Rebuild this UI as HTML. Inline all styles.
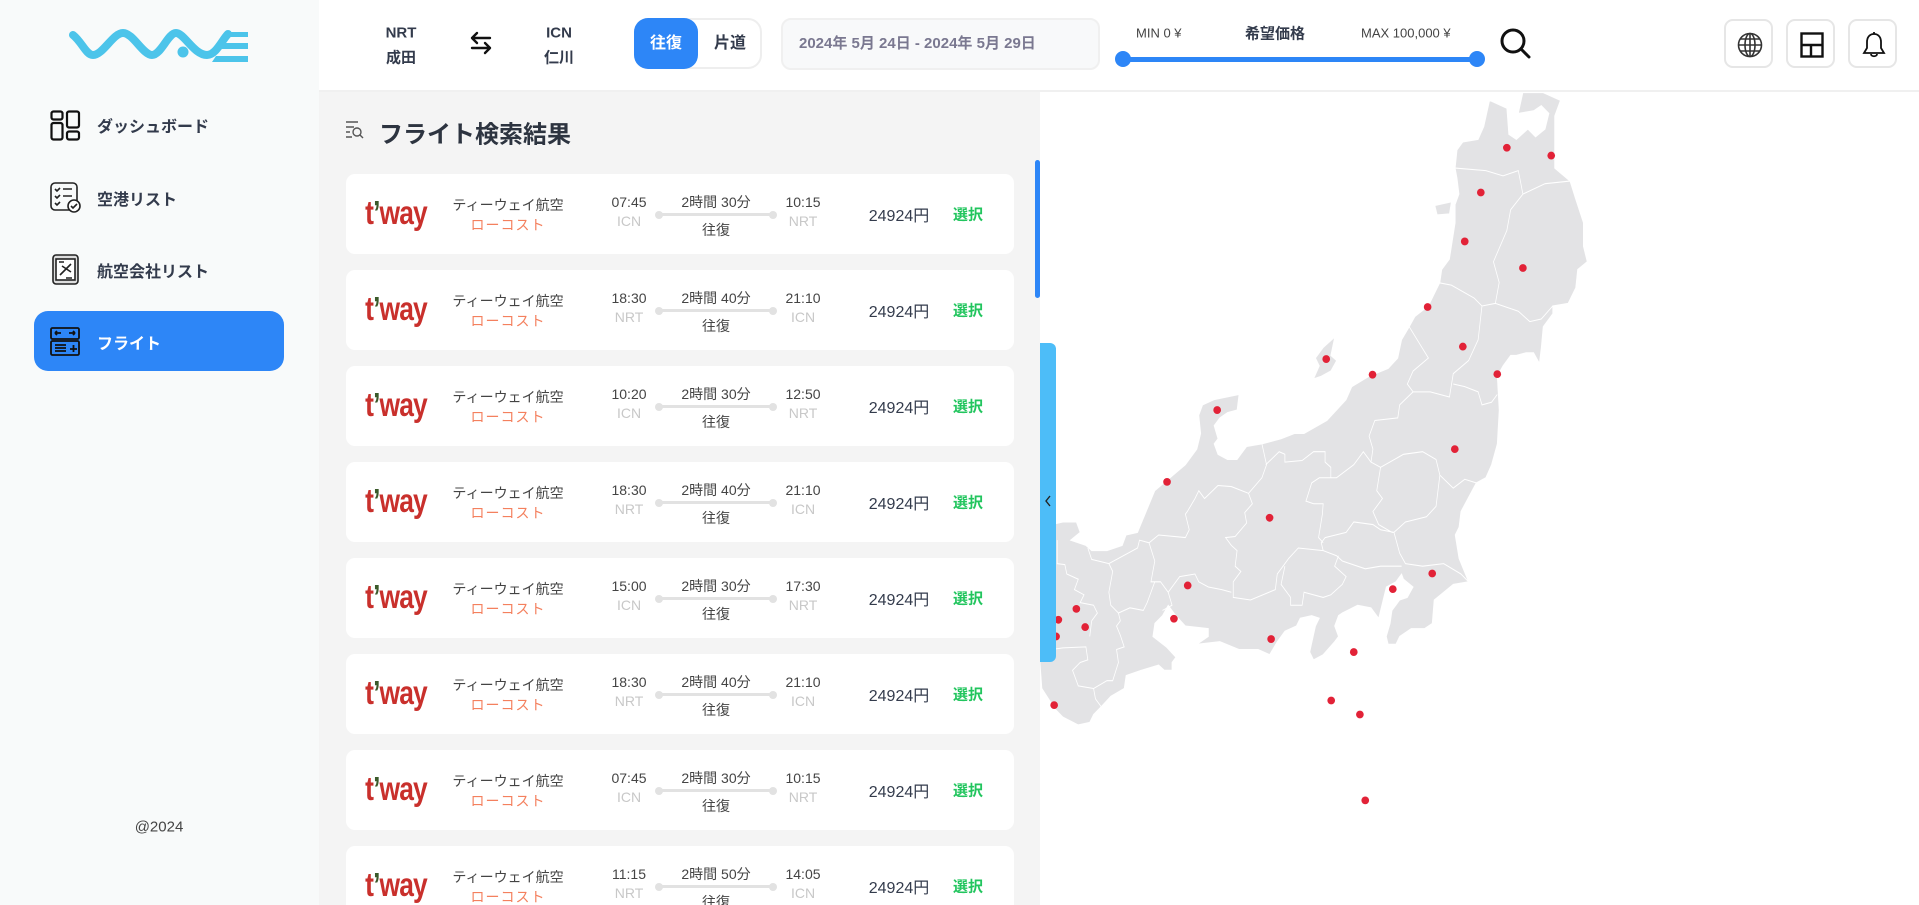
<!DOCTYPE html>
<html><head><meta charset="utf-8"><style>
*{margin:0;padding:0;box-sizing:border-box}
body{width:1919px;height:905px;overflow:hidden;position:relative;background:#fff;font-family:"Liberation Sans","Noto Sans CJK JP",sans-serif;color:#333b4c}
.abs{position:absolute}
#side{left:0;top:0;width:319px;height:905px;background:#f8fafa}
#head{left:319px;top:0;width:1600px;height:92px;background:#fff;border-bottom:2px solid #f0f0f0}
#list{left:319px;top:92px;width:721px;height:813px;background:#f4f4f4;overflow:hidden}
.nav{position:absolute;left:97px;font-size:16px;font-weight:bold;color:#333b4c;transform:translateY(-50%)}
.card{position:absolute;left:27px;width:668px;height:80px;background:#fff;border-radius:9px}
.card div{position:absolute;transform:translate(-50%,-50%);white-space:nowrap}
.card div.tw{font-family:"Liberation Sans",sans-serif;font-weight:bold;font-size:30px;color:#c9302c;letter-spacing:-1px;left:50px;top:40px;transform:translate(-50%,-50%) scale(0.88,1.12)}
.tw span{color:#3a5a2a}
.nm{font-size:14px;color:#444}
.lc{font-size:14px;color:#f4805e;letter-spacing:1px}
.tm{font-size:14px;color:#444}
.cd{font-size:14px;color:#c8c8c8}
.ln{position:absolute;left:312px;top:39px;width:116px;height:3px;background:#e2e2e2}
.ln:before,.ln:after{content:"";position:absolute;top:-2.5px;width:8px;height:8px;border-radius:50%;background:#e2e2e2}
.ln:before{left:-3px}.ln:after{right:-3px}
.pr{font-size:16px;color:#333b4c}
.sl{font-size:15px;font-weight:bold;color:#22c55e}
.ib{position:absolute;top:19px;width:49px;height:49px;border:2px solid #e6e6e6;border-radius:9px;background:#fff}
</style></head><body>
<div id="side" class="abs">
<svg class="abs" style="left:60px;top:20px" width="200" height="50" viewBox="0 0 200 50">
<path d="M13 15 C22 22 26 35 33 35 C43 35 53 13 63 13 C73 13 83 35 92 35 C101 35 108 13 116 13 C124 13 134 35 147 35 C156 35 162 20 168 14" fill="none" stroke="#4cc4ea" stroke-width="8" stroke-linecap="round"/>
<circle cx="123" cy="32" r="5.5" fill="#4cc4ea"/>
<path d="M167 12h21v5h-24z M162 23h26v6h-30z M156 36h32v6h-36z" fill="#4cc4ea"/>
</svg>
<svg class="abs" style="left:50px;top:110px" width="31" height="31" viewBox="0 0 31 31" fill="none" stroke="#111" stroke-width="2.2"><rect x="1.5" y="1.5" width="11" height="8" rx="2"/><rect x="1.5" y="13" width="11" height="16.5" rx="2"/><rect x="17" y="1.5" width="12" height="16" rx="2"/><rect x="17" y="21.5" width="12" height="8" rx="2"/></svg>
<div class="nav" style="top:125px">ダッシュボード</div>
<svg class="abs" style="left:50px;top:182px" width="31" height="31" viewBox="0 0 31 31" fill="none" stroke="#222" stroke-width="1.6"><rect x="1" y="1" width="26" height="27" rx="4"/><path d="M5 7l2 2 3-3M13 7h9M5 14l2 2 3-3M13 14h9M5 21l2 2 3-3"/><circle cx="24" cy="24" r="6" fill="#fff"/><path d="M21 24l2 2 4-4"/></svg>
<div class="nav" style="top:198px">空港リスト</div>
<svg class="abs" style="left:52px;top:254px" width="27" height="31" viewBox="0 0 27 31" fill="none" stroke="#222" stroke-width="1.6"><rect x="1" y="1" width="25" height="29" rx="3" fill="#ddd"/><rect x="4" y="5" width="19" height="21" fill="#fff"/><path d="M8 21l11-11M10 12l9 6M7 8h5M14 24h6"/></svg>
<div class="nav" style="top:270px">航空会社リスト</div>
<div class="abs" style="left:34px;top:311px;width:250px;height:60px;background:#2d86f7;border-radius:14px"></div>
<svg class="abs" style="left:50px;top:326px" width="30" height="30" viewBox="0 0 30 30" fill="none" stroke="#111" stroke-width="1.8"><rect x="1" y="2" width="28" height="11" rx="1.5" fill="#2d86f7"/><rect x="1" y="15" width="28" height="14" rx="1.5" fill="#2d86f7"/><path d="M5 7h6M5 7l2-2M5 7l2 2M19 7h6M25 7l-2-2M25 7l-2 2M5 19h11M5 22h11M5 25h11M20 23h7M23.5 19v7"/></svg>
<div class="nav" style="top:342px;color:#fff">フライト</div>
<div class="abs" style="left:159px;top:827px;transform:translate(-50%,-50%);font-size:15px;color:#444">@2024</div>
</div>

<div id="head" class="abs">
<div class="abs" style="left:82px;top:33px;transform:translate(-50%,-50%);font-size:15px;font-weight:bold">NRT</div>
<div class="abs" style="left:82px;top:57px;transform:translate(-50%,-50%);font-size:15px;font-weight:bold">成田</div>
<svg class="abs" style="left:149px;top:30px" width="26" height="26" viewBox="0 0 26 26" fill="none" stroke="#111" stroke-width="2.4" stroke-linecap="round"><path d="M22 8H4M4 8l5-5M4 8l5 5M4 18h18M22 18l-5-5M22 18l-5 5"/></svg>
<div class="abs" style="left:240px;top:33px;transform:translate(-50%,-50%);font-size:15px;font-weight:bold">ICN</div>
<div class="abs" style="left:240px;top:57px;transform:translate(-50%,-50%);font-size:15px;font-weight:bold">仁川</div>
<div class="abs" style="left:315px;top:18px;width:128px;height:51px;border:2px solid #eee;border-radius:14px;background:#fff"></div>
<div class="abs" style="left:315px;top:18px;width:64px;height:51px;border-radius:14px;background:#2d86f7;color:#fff;font-size:16px;font-weight:bold;text-align:center;line-height:51px">往復</div>
<div class="abs" style="left:379px;top:18px;width:64px;height:51px;font-size:16px;font-weight:bold;text-align:center;line-height:51px">片道</div>
<div class="abs" style="left:462px;top:18px;width:319px;height:52px;border:2px solid #f0f0f0;border-radius:10px;background:#f8f9fa;color:#7a7890;font-size:15px;font-weight:bold;line-height:48px;padding-left:16px">2024年 5月 24日 - 2024年 5月 29日</div>
<div class="abs" style="left:817px;top:33px;transform:translateY(-50%);font-size:13px;color:#444">MIN 0 ¥</div>
<div class="abs" style="left:956px;top:33px;transform:translate(-50%,-50%);font-size:15px;font-weight:bold">希望価格</div>
<div class="abs" style="left:1042px;top:33px;transform:translateY(-50%);font-size:13px;color:#444">MAX 100,000 ¥</div>
<div class="abs" style="left:804px;top:57px;width:354px;height:5px;background:#2d86f7"></div>
<div class="abs" style="left:796px;top:51px;width:16px;height:16px;border-radius:50%;background:#2d86f7"></div>
<div class="abs" style="left:1150px;top:51px;width:16px;height:16px;border-radius:50%;background:#2d86f7"></div>
<svg class="abs" style="left:1180px;top:27px" width="34" height="34" viewBox="0 0 34 34" fill="none" stroke="#111" stroke-width="3"><circle cx="14" cy="14" r="11"/><path d="M22 22l8 8" stroke-linecap="round"/></svg>
<div class="ib" style="left:1405px"><svg style="position:absolute;left:11px;top:11px" width="26" height="26" viewBox="0 0 26 26" fill="none" stroke="#333" stroke-width="1.6"><circle cx="13" cy="13" r="11.5"/><ellipse cx="13" cy="13" rx="5" ry="11.5"/><path d="M1.5 13h23M3.5 7h19M3.5 19h19M13 1.5v23"/></svg></div>
<div class="ib" style="left:1467px"><svg style="position:absolute;left:12px;top:11px" width="24" height="26" viewBox="0 0 24 26" fill="none" stroke="#111" stroke-width="2.4"><rect x="1.5" y="1.5" width="21" height="23"/><path d="M1.5 13h21M11 13v11.5"/></svg></div>
<div class="ib" style="left:1529px"><svg style="position:absolute;left:11px;top:9px" width="26" height="30" viewBox="0 0 26 30" fill="none" stroke="#111" stroke-width="1.8"><path d="M13 2v2M13 4c-5 0-7 4-7 8v6l-3 5h20l-3-5v-6c0-4-2-8-7-8zM10 24c0 3 6 3 6 0"/></svg></div>
</div>

<div id="list" class="abs">
<svg class="abs" style="left:26px;top:28px" width="20" height="20" viewBox="0 0 20 20" fill="none" stroke="#555" stroke-width="1.4"><path d="M1 2h12M1 7h8M1 12h4M1 17h6"/><circle cx="12" cy="12" r="4"/><path d="M15 15l3 3"/></svg>
<div class="abs" style="left:60px;top:40px;transform:translateY(-50%);font-size:24px;font-weight:bold;color:#2d3440">フライト検索結果</div>
<div class="abs" style="left:716px;top:68px;width:5px;height:138px;border-radius:3px;background:#2d86f7"></div>
<div id="cards"></div>
</div>

<svg class="abs" style="left:1040px;top:90px" width="600" height="815" viewBox="0 0 1568 1566" preserveAspectRatio="none">
<g fill="#e3e3e5" stroke="#fff" stroke-width="2">
<path d="M1175 20L1220 35L1225 85L1245 95L1275 75L1295 90L1320 75L1330 45L1310 30L1290 40L1250 45L1262 5L1315 5L1360 20L1345 50L1345 150L1385 175L1400 210L1420 255L1420 300L1430 330L1405 345L1400 380L1380 410L1340 415L1340 430L1315 455L1310 495L1305 525L1290 505L1270 505L1245 510L1230 510L1210 530L1195 550L1200 615L1195 680L1180 720L1165 745L1140 755L1100 810L1095 840L1085 855L1095 900L1120 945L1080 950L1030 980L1025 1025L1005 1035L970 1035L940 1050L930 1065L910 1065L905 1050L915 1025L920 1000L940 980L960 975L975 955L950 940L945 930L930 945L905 955L890 1000L885 1015L865 995L830 990L790 1005L780 1010L770 1030L780 1050L770 1060L740 1085L715 1095L705 1080L720 1030L730 1015L710 1010L680 1015L670 1030L640 1040L620 1060L600 1085L570 1075L520 1075L470 1060L410 1065L440 1050L440 1035L380 1030L355 1010L335 990L320 1010L300 1025L295 1050L330 1070L355 1090L345 1100L345 1115L325 1115L310 1105L265 1115L225 1125L220 1150L185 1165L160 1185L140 1200L130 1215L100 1220L60 1205L40 1190L5 1150L0 1100L0 840L60 830L95 830L105 850L80 865L120 875L135 885L175 885L215 875L225 855L255 850L300 770L340 745L380 720L410 690L420 660L415 625L425 605L455 595L520 585L515 615L490 620L470 630L455 645L465 670L455 680L465 700L490 710L515 710L525 700L540 685L580 680L630 670L665 660L690 660L750 635L800 595L815 570L860 550L910 535L935 515L945 480L965 455L980 435L1015 415L1045 370L1050 345L1070 325L1085 255L1085 220L1095 200L1090 170L1085 150L1090 115L1105 100L1145 95L1160 70Z"/>
<path d="M715 555L735 550L760 540L775 520L760 510L770 475L740 495L720 515L730 530Z"/>
<path d="M1032 222L1075 215L1070 238L1038 240Z"/>
</g>
<g fill="none" stroke="#fff" stroke-width="2">
<path d="M1085 150L1165 155L1210 165L1250 155L1262 200L1320 180L1385 175"/>
<path d="M1262 200L1230 230L1220 270L1185 330L1200 370L1190 410L1155 415L1135 400L1075 375L1040 370"/>
<path d="M1190 410L1250 425L1280 445L1310 440L1340 415"/>
<path d="M1155 415L1145 480L1120 520L1080 545L1070 590L1020 580L975 580L960 565L975 540L1015 515L990 485L965 455"/>
<path d="M1080 565L1110 570L1145 580L1155 605L1180 600L1195 585"/>
<path d="M975 580L940 605L935 630L875 635L860 665L870 690L865 715L890 725L950 700L1000 695L1035 710L1045 740L1080 765L1110 748L1140 755"/>
<path d="M1045 740L1035 800L1010 820L955 830L925 850L940 890L955 910L1000 915L1055 910L1100 930L1120 945"/>
<path d="M890 725L880 770L895 785L870 810L885 835L920 850L925 850L890 845L870 835L820 830L800 850L745 860L735 870L740 885L775 895L790 905L850 920L890 915L945 915"/>
<path d="M580 680L592 720L580 745L545 775L500 762L465 760L430 785L415 770L405 785L385 810L380 815L390 845L380 860L310 855L285 870L260 865L255 880L180 910L135 902L125 880"/>
<path d="M545 775L555 795L535 812L540 832L510 858L485 860L500 875L515 885L510 915L525 925L505 945L505 975L550 980L615 960L620 930L635 915L650 900L675 880L740 885"/>
<path d="M640 915L630 950L655 975L655 990L685 990L690 965L740 975L760 970L790 950L800 935L770 915L780 895"/>
<path d="M590 720L625 695L640 700L640 715L685 712L715 695L745 695L745 715L760 725L760 745L730 745L710 755L695 790L715 795L740 795L738 815L728 860L740 870"/>
<path d="M760 745L775 745L820 720L845 695L865 715"/>
<path d="M285 870L300 905L290 945L315 945L335 965L345 990L320 1000"/>
<path d="M335 965L365 935L405 930L415 945L440 955L475 960L500 965"/>
<path d="M180 910L190 925L180 965L185 990L205 1005L235 995L270 1000L280 985L300 945"/>
<path d="M205 1005L210 1020L200 1030L210 1048L220 1070L200 1075L205 1100L190 1135L175 1135L140 1150L145 1170L160 1185"/>
<path d="M140 1150L100 1145L85 1115L105 1100L125 1095L120 1070L60 1072L30 1075"/>
<path d="M45 865L45 910L65 912L70 930L100 940L90 960L115 970L105 985L140 990L150 1005L135 1020L130 1050"/>
</g>
<g fill="#e22237">
<ellipse cx="1220" cy="111" rx="10" ry="7.5"/><ellipse cx="1336" cy="126" rx="10" ry="7.5"/><ellipse cx="1152" cy="197" rx="10" ry="7.5"/><ellipse cx="1110" cy="291" rx="10" ry="7.5"/><ellipse cx="1262" cy="342" rx="10" ry="7.5"/><ellipse cx="1013" cy="417" rx="10" ry="7.5"/><ellipse cx="1105" cy="493" rx="10" ry="7.5"/><ellipse cx="1195" cy="546" rx="10" ry="7.5"/><ellipse cx="748" cy="517" rx="10" ry="7.5"/><ellipse cx="869" cy="547" rx="10" ry="7.5"/><ellipse cx="463" cy="615" rx="10" ry="7.5"/><ellipse cx="1084" cy="690" rx="10" ry="7.5"/><ellipse cx="332" cy="753" rx="10" ry="7.5"/><ellipse cx="600" cy="822" rx="10" ry="7.5"/><ellipse cx="1025" cy="929" rx="10" ry="7.5"/><ellipse cx="922" cy="959" rx="10" ry="7.5"/><ellipse cx="386" cy="952" rx="10" ry="7.5"/><ellipse cx="350" cy="1016" rx="10" ry="7.5"/><ellipse cx="604" cy="1055" rx="10" ry="7.5"/><ellipse cx="820" cy="1080" rx="10" ry="7.5"/><ellipse cx="761" cy="1173" rx="10" ry="7.5"/><ellipse cx="836" cy="1200" rx="10" ry="7.5"/><ellipse cx="850" cy="1365" rx="10" ry="7.5"/><ellipse cx="95" cy="997" rx="10" ry="7.5"/><ellipse cx="118" cy="1032" rx="10" ry="7.5"/><ellipse cx="48" cy="1018" rx="10" ry="7.5"/><ellipse cx="42" cy="1050" rx="10" ry="7.5"/><ellipse cx="37" cy="1182" rx="10" ry="7.5"/>
</g>
</svg>
<div class="abs" style="left:1040px;top:343px;width:16px;height:319px;background:#4dbdf8;border-radius:0 6px 6px 0"></div>
<svg class="abs" style="left:1043px;top:494px" width="10" height="14" viewBox="0 0 10 14" fill="none" stroke="#222" stroke-width="1.4"><path d="M7 2L3 7l4 5"/></svg>

<script>
var d=[["07:45","ICN","2時間 30分","10:15","NRT"],["18:30","NRT","2時間 40分","21:10","ICN"],["10:20","ICN","2時間 30分","12:50","NRT"],["18:30","NRT","2時間 40分","21:10","ICN"],["15:00","ICN","2時間 30分","17:30","NRT"],["18:30","NRT","2時間 40分","21:10","ICN"],["07:45","ICN","2時間 30分","10:15","NRT"],["11:15","NRT","2時間 50分","14:05","ICN"]];
var h="";
d.forEach(function(r,i){h+='<div class="card" style="top:'+(82+96*i)+'px"><div class="tw">t<span>’</span>way</div><div class="nm" style="left:162px;top:31px">ティーウェイ航空</div><div class="lc" style="left:162px;top:51px">ローコスト</div><div class="tm" style="left:283px;top:28px">'+r[0]+'</div><div class="cd" style="left:283px;top:47px">'+r[1]+'</div><div class="tm" style="left:370px;top:28px">'+r[2]+'</div><span class="ln"></span><div class="tm" style="left:370px;top:56px">往復</div><div class="tm" style="left:457px;top:28px">'+r[3]+'</div><div class="cd" style="left:457px;top:47px">'+r[4]+'</div><div class="pr" style="left:553px;top:40px">24924円</div><div class="sl" style="left:622px;top:40px">選択</div></div>';});
document.getElementById("cards").innerHTML=h;
</script>
</body></html>
